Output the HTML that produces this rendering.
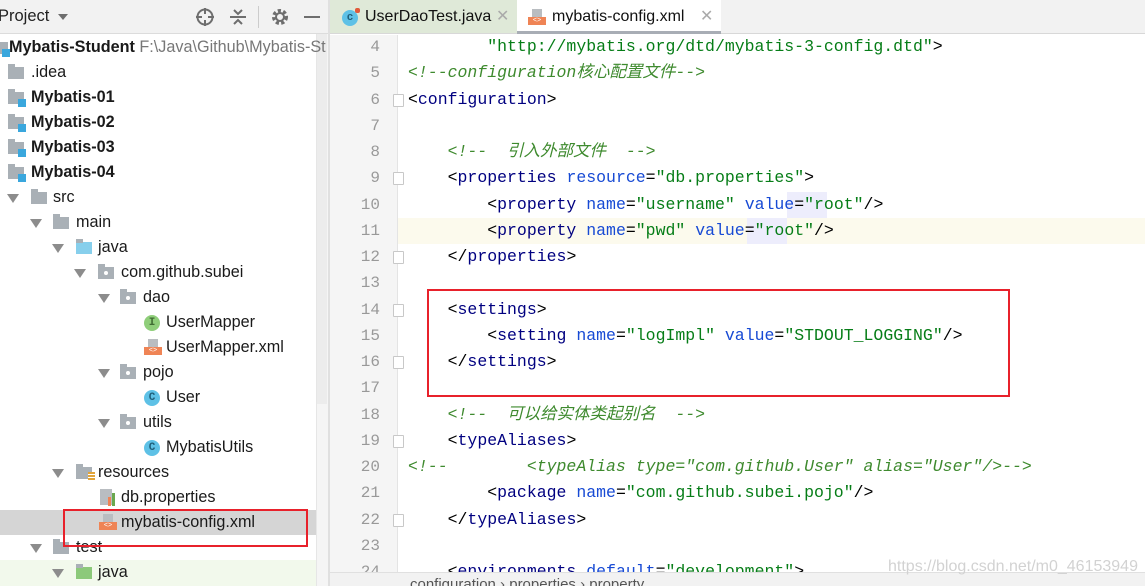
<!DOCTYPE html>
<html><head><meta charset="utf-8"><style>
*{margin:0;padding:0;box-sizing:border-box}
body{width:1145px;height:586px;overflow:hidden;background:#fff;position:relative;font-family:"Liberation Sans","Noto Sans CJK SC",sans-serif}
.a{position:absolute}
.tr{position:absolute;height:25px;line-height:25px;font-size:16.2px;color:#1a1a1a;white-space:nowrap}
.arr{position:absolute;width:0;height:0;border-left:6px solid transparent;border-right:6px solid transparent;border-top:9px solid #8c8c8c}
.fold{position:absolute;width:16px;height:12px;background:#a9b0b6}
.fold:before{content:"";position:absolute;left:0;top:-3px;width:7px;height:4px;background:#a9b0b6}
.pkg:after{content:"";position:absolute;left:6px;top:4px;width:4px;height:4px;background:#fff;border-radius:2px}
.mod:after{content:"";position:absolute;right:-2px;bottom:-3px;width:8px;height:8px;background:#3aa7dd}
.ci{position:absolute;width:16px;height:16px;border-radius:50%;background:#5ec1e6;color:#1f5f7a;font-size:11px;font-weight:bold;text-align:center;line-height:16px;font-family:"Liberation Mono",monospace}
.xi{position:absolute;width:16px;height:16px}
.xi i{position:absolute;left:0;bottom:0;width:18px;height:8px;background:#ef8455;font-size:7px;color:#fff;line-height:8px;text-align:center;font-style:normal}
.xi b{position:absolute;left:4px;top:0;width:10px;height:8px;background:#b9bdc1}
.ln{position:absolute;left:330px;width:50px;text-align:right;font-family:"Liberation Mono",monospace;font-size:16px;color:#999;height:26px;line-height:26px}
.fm{position:absolute;left:393px;width:11px;height:13px;background:#fff;border:1px solid #c8c8c8;border-radius:1px}
.cl{position:absolute;font-family:"Liberation Mono",monospace;font-size:16.5px;height:26px;line-height:26px;white-space:pre;color:#000}
.t{color:#000080}.n{color:#174ad4}.v{color:#067d17}.c{color:#3e8a2e;font-style:italic}
</style></head><body>
<div class="a" style="left:0;top:0;width:328px;height:34px;background:#f2f2f2;border-bottom:1px solid #dcdcdc"></div>
<div class="a" style="left:-2px;top:7px;font-size:16.5px;color:#222">Project</div>
<div class="a" style="left:58px;top:14px;border-left:5px solid transparent;border-right:5px solid transparent;border-top:6px solid #6e6e6e"></div>
<svg class="a" style="left:195px;top:7px" width="20" height="20"><circle cx="10" cy="10" r="7.5" fill="none" stroke="#6e6e6e" stroke-width="2"/><path d="M10 1v6M10 13v6M1 10h6M13 10h6" stroke="#6e6e6e" stroke-width="2"/></svg>
<svg class="a" style="left:228px;top:7px" width="20" height="20"><path d="M2 10h16M6 3l4 4 4-4M6 17l4-4 4 4" stroke="#6e6e6e" stroke-width="2" fill="none"/></svg>
<div class="a" style="left:258px;top:6px;width:1px;height:22px;background:#ccc"></div>
<svg class="a" style="left:270px;top:7px" width="20" height="20"><circle cx="10" cy="10" r="6" fill="none" stroke="#6e6e6e" stroke-width="4" stroke-dasharray="3 2.2"/><circle cx="10" cy="10" r="4" fill="none" stroke="#6e6e6e" stroke-width="2"/></svg>
<div class="a" style="left:304px;top:16px;width:16px;height:2px;background:#6e6e6e"></div>
<div class="a" style="left:316px;top:34px;width:12px;height:552px;background:#f5f5f5;border-left:1px solid #e6e6e6"></div>
<div class="a" style="left:317px;top:34px;width:10px;height:370px;background:#ececec"></div>
<div class="a" style="left:0;top:510px;width:316px;height:25px;background:#d5d5d5"></div>
<div class="a" style="left:0;top:560px;width:316px;height:26px;background:#f2f9ec"></div>

<div class="fold mod" style="left:-8px;top:42px"></div><div class="tr" style="left:9px;top:35px;font-weight:bold">Mybatis-Student <span style="font-weight:normal;color:#777">F:\Java\Github\Mybatis-St</span></div>
<div class="fold" style="left:8px;top:67px"></div><div class="tr" style="left:31px;top:60px">.idea</div>
<div class="fold mod" style="left:8px;top:92px"></div><div class="tr" style="left:31px;top:85px;font-weight:bold">Mybatis-01</div>
<div class="fold mod" style="left:8px;top:117px"></div><div class="tr" style="left:31px;top:110px;font-weight:bold">Mybatis-02</div>
<div class="fold mod" style="left:8px;top:142px"></div><div class="tr" style="left:31px;top:135px;font-weight:bold">Mybatis-03</div>
<div class="fold mod" style="left:8px;top:167px"></div><div class="tr" style="left:31px;top:160px;font-weight:bold">Mybatis-04</div>
<div class="arr" style="left:7px;top:194px"></div><div class="fold" style="left:31px;top:192px"></div><div class="tr" style="left:53px;top:185px">src</div>
<div class="arr" style="left:30px;top:219px"></div><div class="fold" style="left:53px;top:217px"></div><div class="tr" style="left:76px;top:210px">main</div>
<div class="arr" style="left:52px;top:244px"></div><div class="fold" style="left:76px;top:242px;background:#87cfec"></div><div class="tr" style="left:98px;top:235px">java</div>
<div class="arr" style="left:74px;top:269px"></div><div class="fold pkg" style="left:98px;top:267px"></div><div class="tr" style="left:121px;top:260px">com.github.subei</div>
<div class="arr" style="left:98px;top:294px"></div><div class="fold pkg" style="left:120px;top:292px"></div><div class="tr" style="left:143px;top:285px">dao</div>
<div class="ci" style="left:144px;top:315px;background:#8fce7a;color:#3f6b32">I</div><div class="tr" style="left:166px;top:310px">UserMapper</div>
<div class="xi" style="left:144px;top:339px"><b></b><i>&lt;&gt;</i></div><div class="tr" style="left:166px;top:335px">UserMapper.xml</div>
<div class="arr" style="left:98px;top:369px"></div><div class="fold pkg" style="left:120px;top:367px"></div><div class="tr" style="left:143px;top:360px">pojo</div>
<div class="ci" style="left:144px;top:390px">C</div><div class="tr" style="left:166px;top:385px">User</div>
<div class="arr" style="left:98px;top:419px"></div><div class="fold pkg" style="left:120px;top:417px"></div><div class="tr" style="left:143px;top:410px">utils</div>
<div class="ci" style="left:144px;top:440px">C</div><div class="tr" style="left:166px;top:435px">MybatisUtils</div>
<div class="arr" style="left:52px;top:469px"></div><div class="fold" style="left:76px;top:467px"></div><div class="a" style="left:88px;top:472px;width:7px;height:9px;background:repeating-linear-gradient(#e1a43a 0 2px,#fff 2px 3px)"></div><div class="tr" style="left:98px;top:460px">resources</div>
<div class="a" style="left:100px;top:489px;width:12px;height:16px;background:#b9bdc1"></div><div class="a" style="left:108px;top:497px;width:3px;height:9px;background:#ef8455"></div><div class="a" style="left:112px;top:493px;width:3px;height:13px;background:#6aa84f"></div><div class="tr" style="left:121px;top:485px">db.properties</div>
<div class="xi" style="left:99px;top:514px"><b></b><i>&lt;&gt;</i></div><div class="tr" style="left:121px;top:510px">mybatis-config.xml</div>
<div class="arr" style="left:30px;top:544px"></div><div class="fold" style="left:53px;top:542px"></div><div class="tr" style="left:76px;top:535px">test</div>
<div class="arr" style="left:52px;top:569px"></div><div class="fold" style="left:76px;top:567px;background:#8cc97a"></div><div class="tr" style="left:98px;top:560px">java</div>
<div class="a" style="left:63px;top:509px;width:245px;height:38px;border:2px solid #e8212b"></div>

<div class="a" style="left:328px;top:0;width:2px;height:586px;background:#e0e0e0"></div>
<div class="a" style="left:330px;top:0;width:815px;height:34px;background:#f2f2f2;border-bottom:1px solid #d8d8d8"></div>
<div class="a" style="left:330px;top:0;width:187px;height:33px;background:#dfe9d8"></div>
<div class="ci" style="left:342px;top:10px;width:16px;height:16px">c</div>
<div class="a" style="left:355px;top:8px;width:5px;height:5px;background:#e05a3a;border-radius:2px"></div>
<div class="a" style="left:365px;top:8px;font-size:16px;color:#111">UserDaoTest.java</div>
<div class="a" style="left:496px;top:6px;font-size:16px;color:#aaa">✕</div>
<div class="a" style="left:517px;top:0;width:204px;height:34px;background:#fff;border-bottom:3px solid #a8adb5"></div>
<div class="xi" style="left:528px;top:9px"><b></b><i>&lt;&gt;</i></div>
<div class="a" style="left:552px;top:8px;font-size:16px;color:#111">mybatis-config.xml</div>
<div class="a" style="left:700px;top:6px;font-size:16px;color:#aaa">✕</div>

<div class="a" style="left:330px;top:35px;width:68px;height:537px;background:#f5f5f5;border-right:1px solid #e4e4e4"></div>
<div class="a" style="left:398px;top:218px;width:747px;height:26px;background:#fcfaed"></div>
<div class="a" style="left:747px;top:218px;width:40px;height:26px;background:#ededfc"></div>
<div class="a" style="left:787px;top:192px;width:40px;height:26px;background:#ededfc"></div>

<div class="fm" style="top:94px"></div><div class="fm" style="top:172px"></div><div class="fm" style="top:251px"></div><div class="fm" style="top:304px"></div><div class="fm" style="top:356px"></div><div class="fm" style="top:435px"></div><div class="fm" style="top:514px"></div>

<div class="ln" style="top:34px">4</div><div class="ln" style="top:60px">5</div><div class="ln" style="top:87px">6</div><div class="ln" style="top:113px">7</div><div class="ln" style="top:139px">8</div><div class="ln" style="top:165px">9</div><div class="ln" style="top:192px">10</div><div class="ln" style="top:218px">11</div><div class="ln" style="top:244px">12</div><div class="ln" style="top:270px">13</div><div class="ln" style="top:297px">14</div><div class="ln" style="top:323px">15</div><div class="ln" style="top:349px">16</div><div class="ln" style="top:375px">17</div><div class="ln" style="top:402px">18</div><div class="ln" style="top:428px">19</div><div class="ln" style="top:454px">20</div><div class="ln" style="top:480px">21</div><div class="ln" style="top:507px">22</div><div class="ln" style="top:533px">23</div><div class="ln" style="top:559px">24</div>

<div class="cl" style="left:408px;top:34px">        <span class="v">"http://mybatis.org/dtd/mybatis-3-config.dtd"</span>&gt;</div>
<div class="cl c" style="left:408px;top:60px">&lt;!--configuration核心配置文件--&gt;</div>
<div class="cl" style="left:408px;top:87px">&lt;<span class="t">configuration</span>&gt;</div>
<div class="cl c" style="left:408px;top:139px">    &lt;!--  引入外部文件  --&gt;</div>
<div class="cl" style="left:408px;top:165px">    &lt;<span class="t">properties</span> <span class="n">resource</span>=<span class="v">"db.properties"</span>&gt;</div>
<div class="cl" style="left:408px;top:192px">        &lt;<span class="t">property</span> <span class="n">name</span>=<span class="v">"username"</span> <span class="n">value</span>=<span class="v">"root"</span>/&gt;</div>
<div class="cl" style="left:408px;top:218px">        &lt;<span class="t">property</span> <span class="n">name</span>=<span class="v">"pwd"</span> <span class="n">value</span>=<span class="v">"root"</span>/&gt;</div>
<div class="cl" style="left:408px;top:244px">    &lt;/<span class="t">properties</span>&gt;</div>
<div class="cl" style="left:408px;top:297px">    &lt;<span class="t">settings</span>&gt;</div>
<div class="cl" style="left:408px;top:323px">        &lt;<span class="t">setting</span> <span class="n">name</span>=<span class="v">"logImpl"</span> <span class="n">value</span>=<span class="v">"STDOUT_LOGGING"</span>/&gt;</div>
<div class="cl" style="left:408px;top:349px">    &lt;/<span class="t">settings</span>&gt;</div>
<div class="cl c" style="left:408px;top:402px">    &lt;!--  可以给实体类起别名  --&gt;</div>
<div class="cl" style="left:408px;top:428px">    &lt;<span class="t">typeAliases</span>&gt;</div>
<div class="cl c" style="left:408px;top:454px">&lt;!--        &lt;typeAlias type="com.github.User" alias="User"/&gt;--&gt;</div>
<div class="cl" style="left:408px;top:480px">        &lt;<span class="t">package</span> <span class="n">name</span>=<span class="v">"com.github.subei.pojo"</span>/&gt;</div>
<div class="cl" style="left:408px;top:507px">    &lt;/<span class="t">typeAliases</span>&gt;</div>
<div class="cl" style="left:408px;top:559px">    &lt;<span class="t">environments</span> <span class="n">default</span>=<span class="v">"development"</span>&gt;</div>

<div class="a" style="left:427px;top:289px;width:583px;height:108px;border:2px solid #e8212b"></div>
<div class="a" style="left:330px;top:572px;width:815px;height:14px;background:#f2f2f2;border-top:1px solid #e0e0e0;overflow:hidden"><div class="a" style="left:80px;top:4px;font-size:15px;color:#555;line-height:15px;white-space:nowrap">configuration  ›  properties  ›  property</div></div>
<div class="a" style="left:888px;top:558px;font-size:16px;color:#d2d2d2">https://blog.csdn.net/m0_46153949</div>
</body></html>
